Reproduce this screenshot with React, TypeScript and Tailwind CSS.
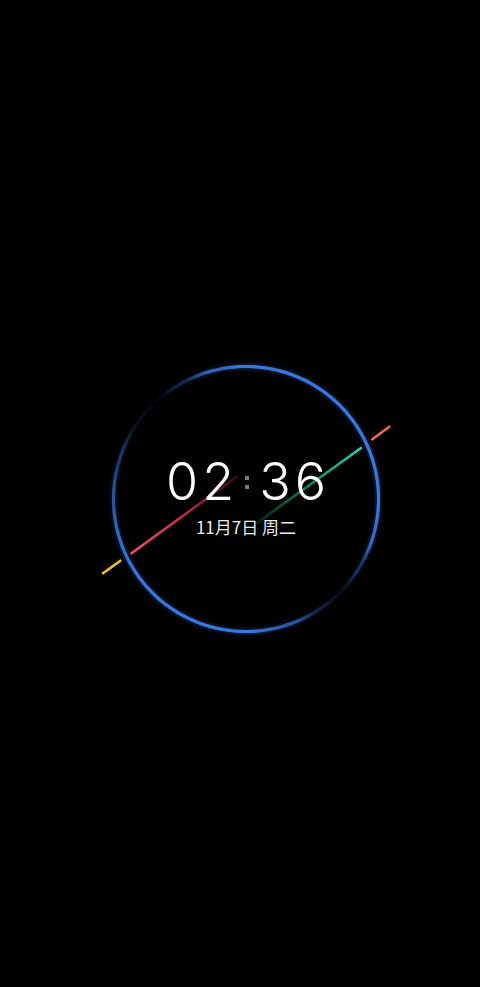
import React from "react";

const CX = 246;
const CY = 499;
const R = 132.5;

const keys: [number, number][] = [
  [0, 1.0],
  [18, 0.9],
  [32, 0.4],
  [45, 0.1],
  [56, 0.3],
  [70, 0.75],
  [90, 1],
  [140, 1],
  [160, 0.9],
  [180, 0.7],
  [200, 0.45],
  [214, 0.15],
  [228, 0.05],
  [240, 0.3],
  [255, 0.85],
  [270, 1],
  [360, 1],
];

function intensity(a: number): number {
  const x = ((a % 360) + 360) % 360;
  for (let i = 0; i < keys.length - 1; i++) {
    const [a0, v0] = keys[i];
    const [a1, v1] = keys[i + 1];
    if (x >= a0 && x <= a1) {
      const t = (x - a0) / (a1 - a0);
      const s = t * t * (3 - 2 * t);
      return v0 + (v1 - v0) * s;
    }
  }
  return 1;
}

function segments() {
  const out: { d: string; c: string }[] = [];
  const step = 1;
  for (let i = 0; i < 360; i += step) {
    const a1 = (i * Math.PI) / 180;
    const a2 = ((i + step + 0.6) * Math.PI) / 180;
    const x1 = CX + R * Math.cos(a1);
    const y1 = CY + R * Math.sin(a1);
    const x2 = CX + R * Math.cos(a2);
    const y2 = CY + R * Math.sin(a2);
    const v = intensity(i + step / 2);
    const r = Math.round(58 * v);
    const g = Math.round(120 * v);
    const b = Math.round(224 * v);
    out.push({
      d: `M${x1.toFixed(2)} ${y1.toFixed(2)} A${R} ${R} 0 0 1 ${x2.toFixed(2)} ${y2.toFixed(2)}`,
      c: `rgb(${r},${g},${b})`,
    });
  }
  return out;
}

export default function App() {
  const segs = segments();
  return (
    <div className="relative w-full h-[987px] bg-black overflow-hidden">
      <svg
        className="absolute inset-0"
        width="480"
        height="987"
        viewBox="0 0 480 987"
      >
        <defs>
          <filter id="glow" x="-20%" y="-20%" width="140%" height="140%">
            <feGaussianBlur stdDeviation="2" />
          </filter>
          <linearGradient id="redg" gradientUnits="userSpaceOnUse" x1="131.5" y1="553.3" x2="236.7" y2="476.7">
            <stop offset="0" stopColor="#ff4a64" />
            <stop offset="0.45" stopColor="#c9304a" />
            <stop offset="1" stopColor="#3a0a14" />
          </linearGradient>
          <linearGradient id="tealg" gradientUnits="userSpaceOnUse" x1="256.7" y1="523" x2="361" y2="448">
            <stop offset="0" stopColor="#04241c" />
            <stop offset="0.55" stopColor="#0f8a70" />
            <stop offset="1" stopColor="#1fd8b4" />
          </linearGradient>
        </defs>
        <g filter="url(#glow)" opacity="0.45">
          {segs.map((s, i) => (
            <path key={i} d={s.d} stroke={s.c} strokeWidth="3.5" fill="none" />
          ))}
        </g>
        <g>
          {segs.map((s, i) => (
            <path key={i} d={s.d} stroke={s.c} strokeWidth="3" fill="none" />
          ))}
        </g>
        <line x1="103" y1="573.3" x2="120.3" y2="560.7" stroke="#f2c21a" strokeWidth="2.6" strokeLinecap="round" />
        <line x1="131.5" y1="553.3" x2="236.7" y2="476.7" stroke="url(#redg)" strokeWidth="2.6" strokeLinecap="round" />
        <line x1="256.7" y1="523" x2="361" y2="448" stroke="url(#tealg)" strokeWidth="2.6" strokeLinecap="round" />
        <line x1="372.3" y1="439.3" x2="389.3" y2="426.7" stroke="#f26a42" strokeWidth="2.6" strokeLinecap="round" />
      </svg>
      <div className="relative flex flex-col items-center pl-[12px] pt-[456px]">
        <div className="flex items-start text-white font-['Inter',sans-serif] font-light text-[52px] leading-[52px] tracking-[4px]">
          <span>02</span>
          <span className="flex flex-col gap-[5px] ml-[7px] mr-[10px] mt-[20px]">
            <span className="block w-[4px] h-[4px] bg-[#7c7c7c]" />
            <span className="block w-[4px] h-[4px] bg-[#7c7c7c]" />
          </span>
          <span className="mr-[-4px]">36</span>
        </div>
        <div className="mt-[8px] text-[17px] leading-[22px] text-[#ececec] font-['Noto_Sans_CJK_SC','Noto_Sans',sans-serif]">
          11月7日 周二
        </div>
      </div>
    </div>
  );
}
